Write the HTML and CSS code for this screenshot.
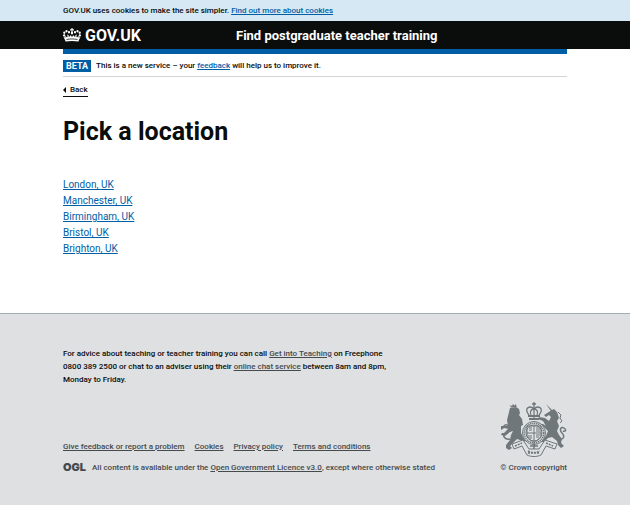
FILE: index.html
```html
<!DOCTYPE html>
<html lang="en">
<head>
<meta charset="utf-8">
<meta name="viewport" content="width=device-width, initial-scale=1">
<title>Pick a location - Find postgraduate teacher training</title>
<link rel="stylesheet" href="styles.css">
</head>
<body>
<div class="cookie-banner">
  <p class="container">GOV.UK uses cookies to make the site simpler. <a href="#cookies">Find out more about cookies</a></p>
</div>
<header class="header">
  <div class="container header-row">
    <a class="logo" href="#home">
      <svg class="crown" viewBox="0 0 36 28" aria-hidden="true">
        <g fill="currentColor">
          <path d="M16.500 0h3l-.8 2.700 2.800-.8v3.400l-2.800-.8 1.500 5.500a2.300 2.300 0 1 1-4.400 0l1.500-5.500-2.800.8V1.900l2.800.8z"/>
          <circle cx="12" cy="8.500" r="2.300"/><circle cx="7" cy="6.500" r="2.300"/><circle cx="2.600" cy="9.500" r="2.300"/><circle cx="2.300" cy="15" r="2.300"/>
          <circle cx="24" cy="8.500" r="2.300"/><circle cx="29" cy="6.500" r="2.300"/><circle cx="33.400" cy="9.500" r="2.300"/><circle cx="33.700" cy="15" r="2.300"/>
          <path d="M5 27C4 23 2 20 1 18l4 1-1-4 4 4c2-2 1-4 0-6 3 0 4 2 3 4 2 1 4-1 4-3l3 4 3-4c0 2 2 4 4 3-1-2 0-4 3-4-1 2-2 4 0 6l4-4-1 4 4-1c-1 2-3 5-4 9-8-1.500-18-1.500-26 0z"/>
        </g>
        <path d="M7 23c7-1.500 15-1.500 22 0" fill="none" stroke="#0b0c0c" stroke-width="1.500"/>
      </svg>
      <span>GOV.UK</span>
    </a>
    <a class="service-name" href="#service">Find postgraduate teacher training</a>
  </div>
</header>
<div class="container">
  <div class="phase-banner">
    <strong class="phase-tag">BETA</strong>
    <span>This is a new service – your <a href="#feedback">feedback</a> will help us to improve it.</span>
  </div>
  <a class="back-link" href="#back">
    <svg class="back-arrow" viewBox="0 0 3 6" aria-hidden="true"><path d="M3 0v6L0 3z" fill="currentColor"/></svg>Back</a>
  <main>
    <h1>Pick a location</h1>
    <ul class="locations">
      <li><a href="#london">London, UK</a></li>
      <li><a href="#manchester">Manchester, UK</a></li>
      <li><a href="#birmingham">Birmingham, UK</a></li>
      <li><a href="#bristol">Bristol, UK</a></li>
      <li><a href="#brighton">Brighton, UK</a></li>
    </ul>
  </main>
</div>
<footer class="footer">
  <div class="container">
    <p class="advice">For advice about teaching or teacher training you can call <a href="#teaching">Get into Teaching</a> on Freephone 0800 389 2500 or chat to an adviser using their <a href="#chat">online chat service</a> between 8am and 8pm, Monday to Friday.</p>
    <div class="footer-meta">
      <div>
        <ul class="footer-links">
          <li><a href="#report">Give feedback or report a problem</a></li>
          <li><a href="#cookies">Cookies</a></li>
          <li><a href="#privacy">Privacy policy</a></li>
          <li><a href="#terms">Terms and conditions</a></li>
        </ul>
        <p class="licence"><span class="ogl">OGL</span><span>All content is available under the <a href="#licence">Open Government Licence v3.0</a>, except where otherwise stated</span></p>
      </div>
      <a class="copyright" href="#copyright">
        <svg class="arms" viewBox="0 0 66 56" aria-hidden="true">
          <!-- lion and unicorn -->
          <g fill="currentColor">
            <path d="M9 3l2 1 1-2 1.500 1.500L15 2l.5 3-5.500.5z"/>
            <path d="M9 6l6-1 3 2 1 4-1 2 3 4 1 6-2 1v7l2 4 3 3-2 2-4-2-3-1-4 4-3 3 2 2-3 2-3-2 0-3 4-5 1-5 2-4-3 1-5 4-4-1 1-2 3 0 4-4-5-1-3 2-2-2 2-2 7 0-1-6z"/>
            <path d="M45 2l7 7-1.500 1z"/>
            <path d="M51 8l2-1 3 3 2 6-2 3 2 5-2 5 2 4 3 4-1 4 3 3-3 2-3-3-1-4-5-4-4 1-4 4-4 0 1-2 5-4 2-5-5-5-4 0-1-2 5 0 3 2-3-5-5-2 1-2 6 1 4 3 2-4-2-2-3 2-2-2z"/>
          </g>
          <g fill="none" stroke="currentColor" stroke-width="1.500">
            <path d="M9 37C4 38 1 34 4 31s5-4 3-7-5 0-6 3M58 37c5 1 6-3 3-6s-1-7 2-5 1 4-1 3"/>
            <path d="M57 10l3 3-1 3 2 3-2 2" stroke-width="1"/>
          </g>
          <!-- motto scroll -->
          <path d="M11 42l11-4 6 9h10l6-9 12 4-2 5-9-3-5 9c-4 2-10 2-14 0l-5-9-8 3z" fill="#dee0e2" stroke="currentColor"/>
          <path d="M14 44l7-3M27 49c4 2 8 2 12 0M45 41l7 3M27 51h12" fill="none" stroke="currentColor" stroke-width="1.500" stroke-dasharray="2 1"/>
          <!-- garter and shield -->
          <circle cx="33" cy="31" r="11.500" fill="#dee0e2" stroke="currentColor"/>
          <circle cx="33" cy="31" r="9.800" fill="none" stroke="currentColor" stroke-width="1.500" stroke-dasharray="1.300 .7"/>
          <circle cx="33" cy="31" r="8" fill="none" stroke="currentColor"/>
          <path d="M26 24h14v8c0 4-3 6-7 8-4-2-7-4-7-8z" fill="none" stroke="currentColor"/>
          <path d="M33 24v15M26 31h14M28 26h3M28 28h3M36 25v5M38 25v5M28 33v3M30 33v4M35 33h4M35 35h3" fill="none" stroke="currentColor"/>
          <path d="M33 41v6M29 44h8" fill="none" stroke="currentColor" stroke-width="1.500"/>
          <!-- crown -->
          <g fill="none" stroke="currentColor" stroke-width="1.300">
            <path d="M33 0v16M31 2h4M28 13c-6-7 1-10 5-6 4-4 11-1 5 6M30 13c-2-4 1-6 3-6 2 0 5 2 3 6"/>
            <path d="M27 14h12M28 17h10" stroke-width="2"/>
          </g>
        </svg>
        <span>© Crown copyright</span>
      </a>
    </div>
  </div>
</footer>
</body>
</html>
```

FILE: styles.css
```css
* { box-sizing: border-box; }
html { background: #dee0e2; }
body {
  margin: 0;
  background: #fff;
  color: #0b0c0c;
  font-family: Roboto, "Liberation Sans", sans-serif;
  font-size: 8px;
  font-weight: 500;
  line-height: 13px;
}
p, h1, ul { margin: 0; padding: 0; }
ul { list-style: none; }
a { color: #005ea5; }
.container { width: 80%; margin: 0 auto; }
.cookie-banner { padding: 4px 0; background: #d5e8f3; }
.header { background: #0b0c0c; color: #fff; }
.header a { color: inherit; text-decoration: none; }
.header-row { display: grid; grid-template-columns: 1fr 2fr; align-items: center; height: 28px; }
.logo { display: flex; align-items: center; gap: 4px; font-size: 16px; font-weight: 700; }
.crown { width: 18px; height: 14px; }
.service-name { padding-left: 5px; font-size: 13px; font-weight: 700; }
.phase-banner {
  display: flex;
  align-items: center;
  gap: 5px;
  padding: 5px 0 4px;
  border-top: 5px solid #005ea5;
  border-bottom: 1px solid #d3d5d7;
}
.phase-tag { padding: 0 3px; background: #005ea5; color: #fff; font-size: 9px; line-height: 12px; }
.back-link {
  display: inline-flex;
  align-items: center;
  gap: 4px;
  margin-top: 6px;
  border-bottom: 1px solid #0b0c0c;
  color: #0b0c0c;
  text-decoration: none;
}
.back-arrow { width: 3px; height: 6px; }
h1 { margin-top: 20px; font-size: 25px; line-height: 30px; font-weight: 700; }
.locations { margin-top: 30px; padding-bottom: 56px; font-size: 10px; font-weight: 400; line-height: 16px; }
.footer { padding: 33px 0 32px; border-top: 1px solid #a1acb2; background: #dee0e2; }
.advice { width: 67%; }
.footer a { color: #454a4d; }
.footer-meta { display: flex; justify-content: space-between; align-items: flex-end; margin-top: 16px; color: #454a4d; }
.footer-links { display: flex; gap: 10px; margin-bottom: 8px; }
.licence { display: flex; align-items: center; gap: 6px; }
.ogl { font-family: Inter, sans-serif; font-size: 11px; font-weight: 900; }
.footer .copyright { display: flex; flex-direction: column; align-items: flex-end; gap: 3px; text-decoration: none; }
.arms { width: 66px; height: 56px; color: #6f777b; }
```
